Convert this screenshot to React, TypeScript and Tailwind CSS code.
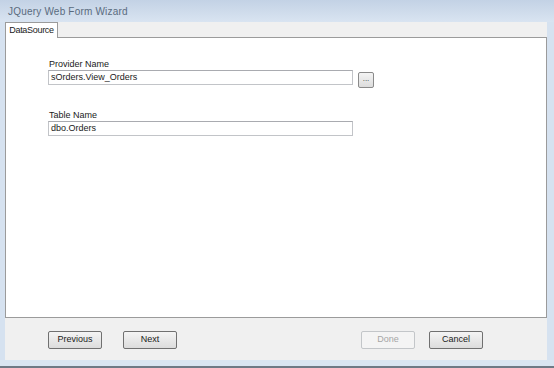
import React from 'react';

const font = { fontFamily: '"Liberation Sans", Arial, sans-serif' };

function WinButton({ label, disabled = false }: { label: string; disabled?: boolean }) {
  return (
    <div
      className={`flex h-[18px] w-[54px] items-center justify-center rounded-[2px] border text-[9px] ${
        disabled
          ? 'border-[#c3c6c9] bg-[#f4f4f4] text-[#a6a6a6]'
          : 'border-[#707070] bg-gradient-to-b from-[#f4f4f4] to-[#dcdcdc] text-[#1a1a1a]'
      }`}
    >
      {label}
    </div>
  );
}

function Field({ label, value }: { label: string; value: string }) {
  return (
    <div className="flex flex-col">
      <span className="pl-[1px] text-[9px] leading-[10px] text-[#1a1a1a]">{label}</span>
      <div className="mt-[1px] flex h-[15px] w-[305px] items-center border border-[#c2c4c8] border-t-[#a9abb0] bg-white pl-[2px] text-[9px] text-[#1a1a1a]">
        {value}
      </div>
    </div>
  );
}

export default function App() {
  return (
    <div style={font} className="flex h-[368px] w-[554px] flex-col bg-[#d7e3f1]">
      <div className="flex h-[22px] shrink-0 items-center bg-gradient-to-b from-[#c3d2e5] to-[#d9e4f1] pl-[8px] text-[10px] tracking-[0.2px] text-[#5a6b7e]">
        JQuery Web Form Wizard
      </div>

      <div className="flex flex-1">
        <div className="w-[5px] shrink-0 bg-[#d6e2f0]" />
        <div className="flex flex-1 flex-col bg-[#f0f0f0]">
          <div className="flex h-[15px] shrink-0 items-end">
            <div className="relative -mb-[1px] flex h-[16px] w-[53px] items-center justify-center border border-b-0 border-[#9b9b9b] bg-white text-[9px] tracking-[-0.3px] text-[#1a1a1a]">
              DataSource
            </div>
          </div>
          <div className="h-[281px] shrink-0 border border-[#9b9b9b] bg-white pl-[42px] pt-[21px]">
            <div className="flex items-end gap-[5px]">
              <Field label="Provider Name" value="sOrders.View_Orders" />
              <div className="-mb-[3px] flex h-[16px] w-[16px] items-center justify-center rounded-[2px] border border-[#8a8a8a] bg-gradient-to-b from-[#f4f4f4] to-[#dcdcdc] pb-[3px] text-[8px] text-[#333]">
                ...
              </div>
            </div>
            <div className="mt-[25px]">
              <Field label="Table Name" value="dbo.Orders" />
            </div>
          </div>
          <div className="flex flex-1 items-start pl-[43px] pr-[64px] pt-[13px]">
            <div className="flex gap-[21px]">
              <WinButton label="Previous" />
              <WinButton label="Next" />
            </div>
            <div className="ml-auto flex gap-[14px]">
              <WinButton label="Done" disabled />
              <WinButton label="Cancel" />
            </div>
          </div>
        </div>
        <div className="w-[7px] shrink-0 bg-[#d6e2f0]" />
      </div>

      <div className="h-[6px] shrink-0 bg-[#dae5f2]" />
      <div className="h-[2px] shrink-0 bg-[#6f7a86]" />
    </div>
  );
}
